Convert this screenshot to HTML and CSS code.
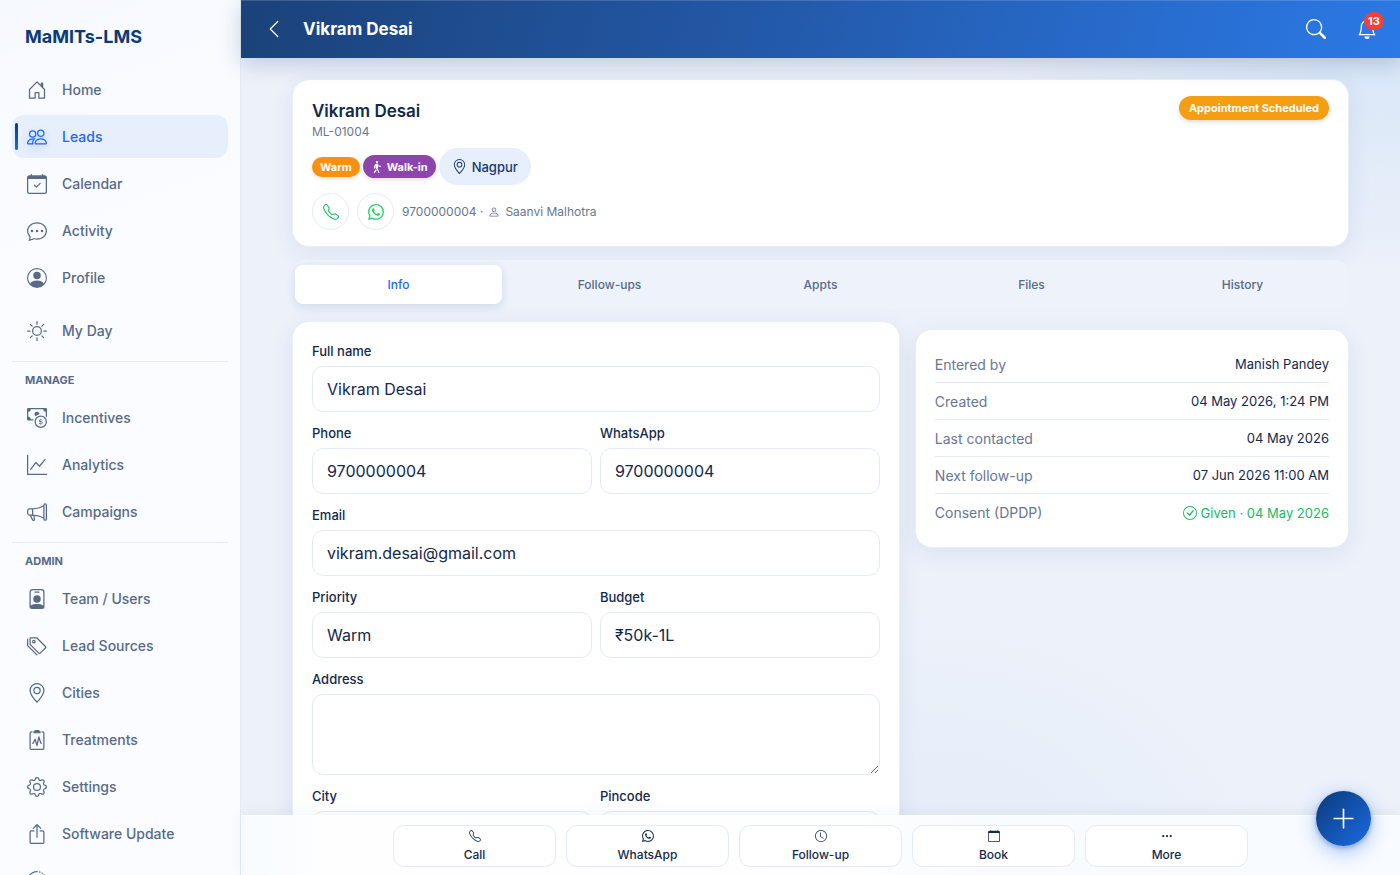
FILE: index.html
```html
<!DOCTYPE html>
<html lang="en">
<head>
<meta charset="utf-8">
<meta name="viewport" content="width=device-width, initial-scale=1">
<title>Vikram Desai – MaMITs-LMS</title>
<link rel="stylesheet" href="styles.css">
</head>
<body>
<svg class="sprite" aria-hidden="true">
  <symbol id="i-house" viewBox="0 0 16 16"><path fill-rule="evenodd" d="M8.354 1.146a.5.5 0 0 0-.708 0l-6 6A.5.5 0 0 0 1.5 7.5v7a.5.5 0 0 0 .5.5h4.5a.5.5 0 0 0 .5-.5v-4h2v4a.5.5 0 0 0 .5.5H14a.5.5 0 0 0 .5-.5v-7a.5.5 0 0 0-.146-.354L13 5.793V2.5a.5.5 0 0 0-.5-.5h-1a.5.5 0 0 0-.5.5v1.293zM2.5 14V7.707l5.5-5.5 5.5 5.5V14H10v-4a.5.5 0 0 0-.5-.5h-3a.5.5 0 0 0-.5.5v4z"/></symbol>
  <symbol id="i-people" viewBox="0 0 16 16"><path d="M15 14s1 0 1-1-1-4-5-4-5 3-5 4 1 1 1 1zm-7.978-1L7 12.996c.001-.264.167-1.03.76-1.72C8.312 10.629 9.282 10 11 10c1.717 0 2.687.63 3.24 1.276.593.69.758 1.457.76 1.72l-.008.002-.014.002zM11 7a2 2 0 1 0 0-4 2 2 0 0 0 0 4m3-2a3 3 0 1 1-6 0 3 3 0 0 1 6 0M6.936 9.28a6 6 0 0 0-1.23-.247A7 7 0 0 0 5 9c-4 0-5 3-5 4q0 1 1 1h4.216A2.24 2.24 0 0 1 5 13c0-1.01.377-2.042 1.09-2.904.243-.294.526-.569.846-.816M4.92 10A5.5 5.5 0 0 0 4 13H1c0-.26.164-1.03.76-1.724.545-.636 1.492-1.256 3.16-1.275ZM1.5 5.5a3 3 0 1 1 6 0 3 3 0 0 1-6 0m3-2a2 2 0 1 0 0 4 2 2 0 0 0 0-4"/></symbol>
  <symbol id="i-calendar-check" viewBox="0 0 16 16"><path d="M10.854 7.146a.5.5 0 0 1 0 .708l-3 3a.5.5 0 0 1-.708 0l-1.5-1.5a.5.5 0 1 1 .708-.708L7.5 9.793l2.646-2.647a.5.5 0 0 1 .708 0"/><path d="M3.5 0a.5.5 0 0 1 .5.5V1h8V.5a.5.5 0 0 1 1 0V1h1a2 2 0 0 1 2 2v11a2 2 0 0 1-2 2H2a2 2 0 0 1-2-2V3a2 2 0 0 1 2-2h1V.5a.5.5 0 0 1 .5-.5M1 4v10a1 1 0 0 0 1 1h12a1 1 0 0 0 1-1V4z"/></symbol>
  <symbol id="i-calendar" viewBox="0 0 16 16"><path d="M3.5 0a.5.5 0 0 1 .5.5V1h8V.5a.5.5 0 0 1 1 0V1h1a2 2 0 0 1 2 2v11a2 2 0 0 1-2 2H2a2 2 0 0 1-2-2V3a2 2 0 0 1 2-2h1V.5a.5.5 0 0 1 .5-.5M1 4v10a1 1 0 0 0 1 1h12a1 1 0 0 0 1-1V4z"/></symbol>
  <symbol id="i-chat" viewBox="0 0 16 16"><path d="M5 8a1 1 0 1 1-2 0 1 1 0 0 1 2 0m4 0a1 1 0 1 1-2 0 1 1 0 0 1 2 0m3 1a1 1 0 1 0 0-2 1 1 0 0 0 0 2"/><path d="m2.165 15.803.02-.004c1.83-.363 2.948-.842 3.468-1.105A9 9 0 0 0 8 15c4.418 0 8-3.134 8-7s-3.582-7-8-7-8 3.134-8 7c0 1.76.743 3.37 1.97 4.6a10.4 10.4 0 0 1-.524 2.318l-.003.011a11 11 0 0 1-.244.637c-.079.186.074.394.273.362a22 22 0 0 0 .693-.125m.8-3.108a1 1 0 0 0-.287-.801C1.618 10.83 1 9.468 1 8c0-3.192 3.004-6 7-6s7 2.808 7 6-3.004 6-7 6a8 8 0 0 1-2.088-.272 1 1 0 0 0-.711.074c-.387.196-1.24.57-2.634.893a11 11 0 0 0 .398-2"/></symbol>
  <symbol id="i-profile" viewBox="0 0 16 16"><path d="M11 6a3 3 0 1 1-6 0 3 3 0 0 1 6 0"/><path fill-rule="evenodd" d="M0 8a8 8 0 1 1 16 0A8 8 0 0 1 0 8m8-7a7 7 0 0 0-5.468 11.37C3.242 11.226 4.805 10 8 10s4.757 1.225 5.468 2.37A7 7 0 0 0 8 1"/></symbol>
  <symbol id="i-sun" viewBox="0 0 16 16"><path d="M8 11a3 3 0 1 1 0-6 3 3 0 0 1 0 6m0 1a4 4 0 1 0 0-8 4 4 0 0 0 0 8M8 0a.5.5 0 0 1 .5.5v2a.5.5 0 0 1-1 0v-2A.5.5 0 0 1 8 0m0 13a.5.5 0 0 1 .5.5v2a.5.5 0 0 1-1 0v-2A.5.5 0 0 1 8 13m8-5a.5.5 0 0 1-.5.5h-2a.5.5 0 0 1 0-1h2a.5.5 0 0 1 .5.5M3 8a.5.5 0 0 1-.5.5h-2a.5.5 0 0 1 0-1h2A.5.5 0 0 1 3 8m10.657-5.657a.5.5 0 0 1 0 .707l-1.414 1.415a.5.5 0 1 1-.707-.708l1.414-1.414a.5.5 0 0 1 .707 0m-9.193 9.193a.5.5 0 0 1 0 .707L3.05 13.657a.5.5 0 0 1-.707-.707l1.414-1.414a.5.5 0 0 1 .707 0m9.193 2.121a.5.5 0 0 1-.707 0l-1.414-1.414a.5.5 0 0 1 .707-.707l1.414 1.414a.5.5 0 0 1 0 .707M4.464 4.465a.5.5 0 0 1-.707 0L2.343 3.05a.5.5 0 1 1 .707-.707l1.414 1.414a.5.5 0 0 1 0 .708"/></symbol>
  <symbol id="i-cash" viewBox="0 0 16 16"><path fill-rule="evenodd" d="M11 15a4 4 0 1 0 0-8 4 4 0 0 0 0 8m5-4a5 5 0 1 1-10 0 5 5 0 0 1 10 0"/><path d="M9.438 11.944c.047.596.518 1.06 1.363 1.116v.44h.375v-.443c.875-.061 1.386-.529 1.386-1.207 0-.618-.39-.936-1.09-1.1l-.296-.07v-1.2c.376.043.614.248.671.532h.658c-.047-.575-.54-1.024-1.329-1.073V8.5h-.375v.45c-.747.073-1.255.522-1.255 1.158 0 .562.378.92 1.007 1.066l.248.061v1.272c-.384-.058-.639-.27-.696-.563h-.668zm1.36-1.354c-.369-.085-.569-.26-.569-.522 0-.294.216-.514.572-.578v1.1zm.432.746c.449.104.655.272.655.569 0 .339-.257.571-.709.614v-1.195z"/><path d="M1 0a1 1 0 0 0-1 1v8a1 1 0 0 0 1 1h4.083q.088-.517.258-1H3a2 2 0 0 0-2-2V3a2 2 0 0 0 2-2h10a2 2 0 0 0 2 2v3.528c.38.34.717.728 1 1.154V1a1 1 0 0 0-1-1z"/><path d="M9.998 5.083 10 5a2 2 0 1 0-3.132 1.65 6 6 0 0 1 3.13-1.567"/></symbol>
  <symbol id="i-graph" viewBox="0 0 16 16"><path fill-rule="evenodd" d="M0 0h1v15h15v1H0zm14.817 3.113a.5.5 0 0 1 .07.704l-4.5 5.5a.5.5 0 0 1-.74.037L7.06 6.767l-3.656 5.027a.5.5 0 0 1-.808-.588l4-5.5a.5.5 0 0 1 .758-.06l2.609 2.61 4.15-5.073a.5.5 0 0 1 .704-.07"/></symbol>
  <symbol id="i-megaphone" viewBox="0 0 16 16"><path d="M13 2.5a1.5 1.5 0 0 1 3 0v11a1.5 1.5 0 0 1-3 0v-.214c-2.162-1.241-4.49-1.843-6.912-2.083l.405 2.712A1 1 0 0 1 5.51 15.1h-.548a1 1 0 0 1-.916-.599l-1.85-3.49-.202-.003A2.014 2.014 0 0 1 0 9V7a2.02 2.02 0 0 1 1.992-2.013 75 75 0 0 0 2.483-.075c3.043-.154 6.148-.849 8.525-2.199zm1 0v11a.5.5 0 0 0 1 0v-11a.5.5 0 0 0-1 0m-1 1.35c-2.344 1.205-5.209 1.842-8 2.033v4.233q.27.015.537.036c2.568.189 5.093.744 7.463 1.993zm-9 6.215v-4.13a95 95 0 0 1-1.992.052A1.02 1.02 0 0 0 1 7v2c0 .55.448 1.002 1.006 1.009A61 61 0 0 1 4 10.065m-.657.975 1.609 3.037.01.024h.548l-.002-.014-.443-2.966a68 68 0 0 0-1.722-.082z"/></symbol>
  <symbol id="i-badge" viewBox="0 0 16 16"><path d="M6.5 2a.5.5 0 0 0 0 1h3a.5.5 0 0 0 0-1zM11 8a3 3 0 1 1-6 0 3 3 0 0 1 6 0"/><path d="M4.5 0A2.5 2.5 0 0 0 2 2.5V14a2 2 0 0 0 2 2h8a2 2 0 0 0 2-2V2.5A2.5 2.5 0 0 0 11.5 0zM3 2.5A1.5 1.5 0 0 1 4.5 1h7A1.5 1.5 0 0 1 13 2.5v10.795a4.2 4.2 0 0 0-.776-.492C11.392 12.387 10.063 12 8 12s-3.392.387-4.224.803a4.2 4.2 0 0 0-.776.492z"/></symbol>
  <symbol id="i-tags" viewBox="0 0 16 16"><path d="M3 2v4.586l7 7L14.586 9l-7-7zM2 2a1 1 0 0 1 1-1h4.586a1 1 0 0 1 .707.293l7 7a1 1 0 0 1 0 1.414l-4.586 4.586a1 1 0 0 1-1.414 0l-7-7A1 1 0 0 1 2 6.586z"/><path d="M5.5 5a.5.5 0 1 1 0-1 .5.5 0 0 1 0 1m0 1a1.5 1.5 0 1 0 0-3 1.5 1.5 0 0 0 0 3M1 7.086a1 1 0 0 0 .293.707L8.75 15.25l-.043.043a1 1 0 0 1-1.414 0l-7-7A1 1 0 0 1 0 7.586V3a1 1 0 0 1 1-1z"/></symbol>
  <symbol id="i-geo" viewBox="0 0 16 16"><path d="M12.166 8.94c-.524 1.062-1.234 2.12-1.96 3.07A32 32 0 0 1 8 14.58a32 32 0 0 1-2.206-2.57c-.726-.95-1.436-2.008-1.96-3.07C3.304 7.867 3 6.862 3 6a5 5 0 0 1 10 0c0 .862-.305 1.867-.834 2.94M8 16s6-5.686 6-10A6 6 0 0 0 2 6c0 4.314 6 10 6 10"/><path d="M8 8a2 2 0 1 1 0-4 2 2 0 0 1 0 4m0 1a3 3 0 1 0 0-6 3 3 0 0 0 0 6"/></symbol>
  <symbol id="i-clipboard" viewBox="0 0 16 16"><path d="M9.5 0a.5.5 0 0 1 .5.5.5.5 0 0 0 .5.5.5.5 0 0 1 .5.5V2a.5.5 0 0 1-.5.5h-5A.5.5 0 0 1 5 2v-.5a.5.5 0 0 1 .5-.5.5.5 0 0 0 .5-.5.5.5 0 0 1 .5-.5z"/><path d="M3 2.5a.5.5 0 0 1 .5-.5H4a.5.5 0 0 0 0-1h-.5A1.5 1.5 0 0 0 2 2.5v12A1.5 1.5 0 0 0 3.5 16h9a1.5 1.5 0 0 0 1.5-1.5v-12A1.5 1.5 0 0 0 12.5 1H12a.5.5 0 0 0 0 1h.5a.5.5 0 0 1 .5.5v12a.5.5 0 0 1-.5.5h-9a.5.5 0 0 1-.5-.5z"/><path d="M9.979 5.356a.5.5 0 0 0-.968.04L7.92 10.49l-.94-3.135a.5.5 0 0 0-.926-.08L4.69 10H4.5a.5.5 0 0 0 0 1H5a.5.5 0 0 0 .447-.276l.936-1.873 1.138 3.793a.5.5 0 0 0 .968-.04L9.58 7.51l.94 3.135A.5.5 0 0 0 11 11h.5a.5.5 0 0 0 0-1h-.128z"/></symbol>
  <symbol id="i-gear" viewBox="0 0 16 16"><path d="M8 4.754a3.246 3.246 0 1 0 0 6.492 3.246 3.246 0 0 0 0-6.492M5.754 8a2.246 2.246 0 1 1 4.492 0 2.246 2.246 0 0 1-4.492 0"/><path d="M9.796 1.343c-.527-1.79-3.065-1.79-3.592 0l-.094.319a.873.873 0 0 1-1.255.52l-.292-.16c-1.64-.892-3.433.902-2.54 2.541l.159.292a.873.873 0 0 1-.52 1.255l-.319.094c-1.79.527-1.79 3.065 0 3.592l.319.094a.873.873 0 0 1 .52 1.255l-.16.292c-.892 1.64.901 3.434 2.541 2.54l.292-.159a.873.873 0 0 1 1.255.52l.094.319c.527 1.79 3.065 1.79 3.592 0l.094-.319a.873.873 0 0 1 1.255-.52l.292.16c1.64.893 3.434-.902 2.54-2.541l-.159-.292a.873.873 0 0 1 .52-1.255l.319-.094c1.79-.527 1.79-3.065 0-3.592l-.319-.094a.873.873 0 0 1-.52-1.255l.16-.292c.893-1.64-.902-3.433-2.541-2.54l-.292.159a.873.873 0 0 1-1.255-.52zm-2.633.283c.246-.835 1.428-.835 1.674 0l.094.319a1.873 1.873 0 0 0 2.693 1.115l.291-.16c.764-.415 1.6.42 1.184 1.185l-.159.292a1.873 1.873 0 0 0 1.116 2.692l.318.094c.835.246.835 1.428 0 1.674l-.319.094a1.873 1.873 0 0 0-1.115 2.693l.16.291c.415.764-.42 1.6-1.185 1.184l-.291-.159a1.873 1.873 0 0 0-2.693 1.116l-.094.318c-.246.835-1.428.835-1.674 0l-.094-.319a1.873 1.873 0 0 0-2.692-1.115l-.292.16c-.764.415-1.6-.42-1.184-1.185l.159-.291A1.873 1.873 0 0 0 1.945 8.93l-.319-.094c-.835-.246-.835-1.428 0-1.674l.319-.094A1.873 1.873 0 0 0 3.06 4.377l-.16-.292c-.415-.764.42-1.6 1.185-1.184l.292.159a1.873 1.873 0 0 0 2.692-1.115z"/></symbol>
  <symbol id="i-up" viewBox="0 0 16 16"><path fill-rule="evenodd" d="M3.5 6a.5.5 0 0 0-.5.5v8a.5.5 0 0 0 .5.5h9a.5.5 0 0 0 .5-.5v-8a.5.5 0 0 0-.5-.5h-2a.5.5 0 0 1 0-1h2A1.5 1.5 0 0 1 14 6.5v8a1.5 1.5 0 0 1-1.5 1.5h-9A1.5 1.5 0 0 1 2 14.5v-8A1.5 1.5 0 0 1 3.5 5h2a.5.5 0 0 1 0 1z"/><path fill-rule="evenodd" d="M7.646.146a.5.5 0 0 1 .708 0l3 3a.5.5 0 0 1-.708.708L8.5 1.707V10.5a.5.5 0 0 1-1 0V1.707L5.354 3.854a.5.5 0 1 1-.708-.708z"/></symbol>
  <symbol id="i-history" viewBox="0 0 16 16"><path d="M8.515 1.019A7 7 0 0 0 8 1V0a8 8 0 0 1 .589.022zm2.004.45a7 7 0 0 0-.985-.299l.219-.976q.576.129 1.126.342zm1.37.71a7 7 0 0 0-.439-.27l.493-.87a8 8 0 0 1 .979.654l-.615.789a7 7 0 0 0-.418-.302zm1.834 1.79a7 7 0 0 0-.653-.796l.724-.69q.406.429.747.91zm.744 1.352a7 7 0 0 0-.214-.468l.893-.45a8 8 0 0 1 .45 1.088l-.95.313a7 7 0 0 0-.179-.483m.53 2.507a7 7 0 0 0-.1-1.025l.985-.17q.1.58.116 1.17zm-.131 1.538q.05-.254.081-.51l.993.123a8 8 0 0 1-.23 1.155l-.964-.267q.069-.247.12-.501m-.952 2.379q.276-.436.486-.908l.914.405q-.24.54-.555 1.038zm-.964 1.205q.183-.183.35-.378l.758.653a8 8 0 0 1-.401.432z"/><path d="M8 1a7 7 0 1 0 4.95 11.95l.707.707A8.001 8.001 0 1 1 8 0z"/><path d="M7.5 3a.5.5 0 0 1 .5.5v5.21l3.248 1.856a.5.5 0 0 1-.496.868l-3.5-2A.5.5 0 0 1 7 9V3.5a.5.5 0 0 1 .5-.5"/></symbol>
  <symbol id="i-back" viewBox="0 0 16 16"><path fill-rule="evenodd" d="M11.354 1.646a.5.5 0 0 1 0 .708L5.707 8l5.647 5.646a.5.5 0 0 1-.708.708l-6-6a.5.5 0 0 1 0-.708l6-6a.5.5 0 0 1 .708 0"/></symbol>
  <symbol id="i-search" viewBox="0 0 16 16"><path d="M11.742 10.344a6.5 6.5 0 1 0-1.397 1.398h-.001q.044.06.098.115l3.85 3.85a1 1 0 0 0 1.415-1.414l-3.85-3.85a1 1 0 0 0-.115-.1zM12 6.5a5.5 5.5 0 1 1-11 0 5.5 5.5 0 0 1 11 0"/></symbol>
  <symbol id="i-bell" viewBox="0 0 16 16"><path d="M8 16a2 2 0 0 0 2-2H6a2 2 0 0 0 2 2M8 1.918l-.797.161A4 4 0 0 0 4 6c0 .628-.134 2.197-.459 3.742-.16.767-.376 1.566-.663 2.258h10.244c-.287-.692-.502-1.49-.663-2.258C12.134 8.197 12 6.628 12 6a4 4 0 0 0-3.203-3.92zM14.22 12c.223.447.481.801.78 1H1c.299-.199.557-.553.78-1C2.68 10.2 3 6.88 3 6c0-2.42 1.72-4.44 4.005-4.901a1 1 0 1 1 1.99 0A5 5 0 0 1 13 6c0 .88.32 4.2 1.22 6"/></symbol>
  <symbol id="i-phone" viewBox="0 0 16 16"><path d="M3.654 1.328a.678.678 0 0 0-1.015-.063L1.605 2.3c-.483.484-.661 1.169-.45 1.77a17.6 17.6 0 0 0 4.168 6.608 17.6 17.6 0 0 0 6.608 4.168c.601.211 1.286.033 1.77-.45l1.034-1.034a.678.678 0 0 0-.063-1.015l-2.307-1.794a.68.68 0 0 0-.58-.122l-2.19.547a1.75 1.75 0 0 1-1.657-.459L5.482 8.062a1.75 1.75 0 0 1-.46-1.657l.548-2.19a.68.68 0 0 0-.122-.58zM1.884.511a1.745 1.745 0 0 1 2.612.163L6.29 2.98c.329.423.445.974.315 1.494l-.547 2.19a.68.68 0 0 0 .178.643l2.457 2.457a.68.68 0 0 0 .644.178l2.189-.547a1.75 1.75 0 0 1 1.494.315l2.306 1.794c.829.645.905 1.87.163 2.611l-1.034 1.034c-.74.74-1.846 1.065-2.877.702a18.6 18.6 0 0 1-7.01-4.42 18.6 18.6 0 0 1-4.42-7.009c-.362-1.03-.037-2.137.703-2.877z"/></symbol>
  <symbol id="i-whatsapp" viewBox="0 0 16 16"><path d="M13.601 2.326A7.85 7.85 0 0 0 7.994 0C3.627 0 .068 3.558.064 7.926c0 1.399.366 2.76 1.057 3.965L0 16l4.204-1.102a7.9 7.9 0 0 0 3.79.965h.004c4.368 0 7.926-3.558 7.93-7.93A7.9 7.9 0 0 0 13.6 2.326zM7.994 14.521a6.6 6.6 0 0 1-3.356-.92l-.24-.144-2.494.654.666-2.433-.156-.251a6.56 6.56 0 0 1-1.007-3.505c0-3.626 2.957-6.584 6.591-6.584a6.56 6.56 0 0 1 4.66 1.931 6.56 6.56 0 0 1 1.928 4.66c-.004 3.639-2.961 6.592-6.592 6.592m3.615-4.934c-.197-.099-1.17-.578-1.353-.646-.182-.065-.315-.099-.445.099-.133.197-.513.646-.627.775-.114.133-.232.148-.43.05-.197-.1-.836-.308-1.592-.985-.59-.525-.985-1.175-1.103-1.372-.114-.198-.011-.304.088-.403.087-.088.197-.232.296-.346.1-.114.133-.198.198-.33.065-.134.034-.248-.015-.347-.05-.099-.445-1.076-.612-1.47-.16-.389-.323-.335-.445-.34-.114-.007-.247-.007-.38-.007a.73.73 0 0 0-.529.247c-.182.198-.691.677-.691 1.654s.71 1.916.81 2.049c.098.133 1.394 2.132 3.383 2.992.47.205.84.326 1.129.418.475.152.904.129 1.246.08.38-.058 1.171-.48 1.338-.943.164-.464.164-.86.114-.943-.049-.084-.182-.133-.38-.232"/></symbol>
  <symbol id="i-person" viewBox="0 0 16 16"><path d="M8 8a3 3 0 1 0 0-6 3 3 0 0 0 0 6m2-3a2 2 0 1 1-4 0 2 2 0 0 1 4 0m4 8c0 1-1 1-1 1H3s-1 0-1-1 1-4 6-4 6 3 6 4m-1-.004c-.001-.246-.154-.986-.832-1.664C11.516 10.68 10.289 10 8 10s-3.516.68-4.168 1.332c-.678.678-.83 1.418-.832 1.664z"/></symbol>
  <symbol id="i-walk" viewBox="0 0 16 16"><path d="M9.5 1.5a1.5 1.5 0 1 1-3 0 1.5 1.5 0 0 1 3 0M6.44 3.752A.75.75 0 0 1 7 3.5h1.445c.742 0 1.32.643 1.243 1.38l-.43 4.083a1.8 1.8 0 0 1-.088.395l-.318.906.213.242a.8.8 0 0 1 .114.175l2 4.25a.75.75 0 1 1-1.357.638l-1.956-4.154-1.68-1.921A.75.75 0 0 1 6 8.96l.138-2.613-.435.489-.464 2.786a.75.75 0 1 1-1.48-.246l.5-3a.75.75 0 0 1 .18-.375l2-2.25z"/><path d="M6.25 11.745v-1.418l1.204 1.375.261.524a.8.8 0 0 1-.12.231l-2.5 3.25a.75.75 0 1 1-1.19-.914zm4.22-4.215-.494-.494.205-1.843.006-.067 1.124 1.124h1.44a.75.75 0 0 1 0 1.5H11a.75.75 0 0 1-.531-.22Z"/></symbol>
  <symbol id="i-check" viewBox="0 0 16 16"><path d="M8 15A7 7 0 1 1 8 1a7 7 0 0 1 0 14m0 1A8 8 0 1 0 8 0a8 8 0 0 0 0 16"/><path d="m10.97 4.97-.02.022-3.473 4.425-2.093-2.094a.75.75 0 0 0-1.06 1.06L6.97 11.03a.75.75 0 0 0 1.079-.02l3.992-4.99a.75.75 0 0 0-1.071-1.05"/></symbol>
  <symbol id="i-clock" viewBox="0 0 16 16"><path d="M8 3.5a.5.5 0 0 0-1 0V9a.5.5 0 0 0 .252.434l3.5 2a.5.5 0 0 0 .496-.868L8 8.71z"/><path d="M8 16A8 8 0 1 0 8 0a8 8 0 0 0 0 16m7-8A7 7 0 1 1 1 8a7 7 0 0 1 14 0"/></symbol>
  <symbol id="i-dots" viewBox="0 0 16 16"><path d="M3 9.5a1.5 1.5 0 1 1 0-3 1.5 1.5 0 0 1 0 3m5 0a1.5 1.5 0 1 1 0-3 1.5 1.5 0 0 1 0 3m5 0a1.5 1.5 0 1 1 0-3 1.5 1.5 0 0 1 0 3"/></symbol>
  <symbol id="i-plus" viewBox="0 0 16 16"><path fill-rule="evenodd" d="M8 2a.5.5 0 0 1 .5.5v5h5a.5.5 0 0 1 0 1h-5v5a.5.5 0 0 1-1 0v-5h-5a.5.5 0 0 1 0-1h5v-5A.5.5 0 0 1 8 2"/></symbol>
</svg>

<div class="app">
  <aside class="sidebar">
    <div class="brand">MaMITs-LMS</div>
    <nav class="nav" aria-label="Main">
      <div class="nav-group">
        <a class="nav-item" href="#"><svg class="icon"><use href="#i-house"/></svg>Home</a>
        <a class="nav-item active" href="#" aria-current="page"><svg class="icon"><use href="#i-people"/></svg>Leads</a>
        <a class="nav-item" href="#"><svg class="icon"><use href="#i-calendar-check"/></svg>Calendar</a>
        <a class="nav-item" href="#"><svg class="icon"><use href="#i-chat"/></svg>Activity</a>
        <a class="nav-item" href="#"><svg class="icon"><use href="#i-profile"/></svg>Profile</a>
      </div>
      <div class="nav-group my-day">
        <a class="nav-item" href="#"><svg class="icon"><use href="#i-sun"/></svg>My Day</a>
      </div>
      <div class="nav-group section">
        <h2 class="nav-title">MANAGE</h2>
        <a class="nav-item" href="#"><svg class="icon"><use href="#i-cash"/></svg>Incentives</a>
        <a class="nav-item" href="#"><svg class="icon"><use href="#i-graph"/></svg>Analytics</a>
        <a class="nav-item" href="#"><svg class="icon"><use href="#i-megaphone"/></svg>Campaigns</a>
      </div>
      <div class="nav-group section">
        <h2 class="nav-title">ADMIN</h2>
        <a class="nav-item" href="#"><svg class="icon"><use href="#i-badge"/></svg>Team / Users</a>
        <a class="nav-item" href="#"><svg class="icon"><use href="#i-tags"/></svg>Lead Sources</a>
        <a class="nav-item" href="#"><svg class="icon"><use href="#i-geo"/></svg>Cities</a>
        <a class="nav-item" href="#"><svg class="icon"><use href="#i-clipboard"/></svg>Treatments</a>
        <a class="nav-item" href="#"><svg class="icon"><use href="#i-gear"/></svg>Settings</a>
        <a class="nav-item" href="#"><svg class="icon"><use href="#i-up"/></svg>Software Update</a>
        <a class="nav-item" href="#"><svg class="icon"><use href="#i-history"/></svg>Audit Log</a>
      </div>
    </nav>
  </aside>

  <div class="main">
    <header class="topbar">
      <button class="icon-btn" type="button" aria-label="Back"><svg class="icon"><use href="#i-back"/></svg></button>
      <h1 class="topbar-title">Vikram Desai</h1>
      <div class="topbar-tools">
        <button class="icon-btn" type="button" aria-label="Search"><svg class="icon"><use href="#i-search"/></svg></button>
        <button class="icon-btn" type="button" aria-label="Notifications"><svg class="icon"><use href="#i-bell"/></svg><span class="count">13</span></button>
      </div>
    </header>

    <main class="content">
      <div class="container">
        <section class="card hero">
          <div class="hero-main">
            <h2 class="hero-name">Vikram Desai</h2>
            <p class="hero-id">ML-01004</p>
            <div class="tags">
              <span class="tag warm">Warm</span>
              <span class="tag walk"><svg class="icon"><use href="#i-walk"/></svg>Walk-in</span>
              <span class="place"><svg class="icon"><use href="#i-geo"/></svg>Nagpur</span>
            </div>
            <div class="contact">
              <a class="round call" href="#" aria-label="Call"><svg class="icon"><use href="#i-phone"/></svg></a>
              <a class="round chat" href="#" aria-label="WhatsApp"><svg class="icon"><use href="#i-whatsapp"/></svg></a>
              <span class="contact-text">9700000004 · <svg class="icon"><use href="#i-person"/></svg> Saanvi Malhotra</span>
            </div>
          </div>
          <span class="status">Appointment Scheduled</span>
        </section>

        <div class="tabs" role="tablist">
          <button class="tab selected" type="button" role="tab" aria-selected="true">Info</button>
          <button class="tab" type="button" role="tab" aria-selected="false">Follow-ups</button>
          <button class="tab" type="button" role="tab" aria-selected="false">Appts</button>
          <button class="tab" type="button" role="tab" aria-selected="false">Files</button>
          <button class="tab" type="button" role="tab" aria-selected="false">History</button>
        </div>

        <div class="columns">
          <form class="card form">
            <div class="field wide"><label for="name">Full name</label><input id="name" type="text" value="Vikram Desai"></div>
            <div class="field"><label for="phone">Phone</label><input id="phone" type="tel" value="9700000004"></div>
            <div class="field"><label for="wa">WhatsApp</label><input id="wa" type="tel" value="9700000004"></div>
            <div class="field wide"><label for="email">Email</label><input id="email" type="email" value="vikram.desai@gmail.com"></div>
            <div class="field"><label for="priority">Priority</label><select id="priority"><option>Warm</option></select></div>
            <div class="field"><label for="budget">Budget</label><select id="budget"><option>₹50k-1L</option></select></div>
            <div class="field wide"><label for="address">Address</label><textarea id="address"></textarea></div>
            <div class="field"><label for="city">City</label><input id="city" type="text"></div>
            <div class="field"><label for="pin">Pincode</label><input id="pin" type="text"></div>
          </form>

          <dl class="card facts">
            <div class="fact"><dt>Entered by</dt><dd>Manish Pandey</dd></div>
            <div class="fact"><dt>Created</dt><dd>04 May 2026, 1:24 PM</dd></div>
            <div class="fact"><dt>Last contacted</dt><dd>04 May 2026</dd></div>
            <div class="fact"><dt>Next follow-up</dt><dd>07 Jun 2026 11:00 AM</dd></div>
            <div class="fact"><dt>Consent (DPDP)</dt><dd class="given"><svg class="icon"><use href="#i-check"/></svg>Given · 04 May 2026</dd></div>
          </dl>
        </div>
      </div>
    </main>

    <footer class="actions">
      <div class="actions-row">
        <button class="action" type="button"><svg class="icon"><use href="#i-phone"/></svg>Call</button>
        <button class="action" type="button"><svg class="icon"><use href="#i-whatsapp"/></svg>WhatsApp</button>
        <button class="action" type="button"><svg class="icon"><use href="#i-clock"/></svg>Follow-up</button>
        <button class="action" type="button"><svg class="icon"><use href="#i-calendar"/></svg>Book</button>
        <button class="action" type="button"><svg class="icon"><use href="#i-dots"/></svg>More</button>
      </div>
    </footer>
  </div>
  <button class="fab" type="button" aria-label="Add lead"><svg class="icon"><use href="#i-plus"/></svg></button>
</div>
</body>
</html>
```

FILE: styles.css
```css
:root {
  --ink: #13294a;
  --muted: #68778f;
  --nav: #586a86;
  --line: #e4ebf7;
  --blue: #1a6be6;
}

* { box-sizing: border-box; }

body {
  margin: 0;
  font-family: Inter, "Noto Sans", sans-serif;
  font-size: 14px;
  color: var(--ink);
}

h1, h2, p, dl, dd { margin: 0; }
button, input, select, textarea { font: inherit; color: inherit; }
button { cursor: pointer; }

.sprite { position: absolute; width: 0; height: 0; }

.icon {
  display: block;
  flex: none;
  width: 20px;
  height: 20px;
  fill: currentColor;
}

.app {
  display: flex;
  height: 100vh;
  overflow: hidden;
  background:
    radial-gradient(ellipse 420px 280px at 100% 0, #d3e4f7, transparent),
    radial-gradient(ellipse 400px 300px at 66% 100%, #e5edf9, transparent),
    #edf1fa;
}

/* Sidebar */
.sidebar {
  flex: none;
  width: 241px;
  padding: 0 12px;
  overflow: hidden;
  border-right: 1px solid #e3eaf6;
  background: linear-gradient(160deg, #f6f9fe, #fafcff 30%);
}

.brand {
  padding: 25px 13px 19px;
  font-size: 18px;
  line-height: 24px;
  font-weight: 700;
  color: #0b3a78;
}

.nav-group {
  display: flex;
  flex-direction: column;
  gap: 4px;
}

.my-day { margin-top: 10px; }

.section {
  margin-top: 9px;
  padding-top: 10px;
  border-top: 1px solid var(--line);
}

.nav-title {
  margin-bottom: 4px;
  padding-left: 13px;
  font-size: 11px;
  line-height: 16px;
  font-weight: 700;
  color: var(--nav);
}

.nav-item {
  position: relative;
  display: flex;
  align-items: center;
  gap: 15px;
  height: 43px;
  padding-left: 15px;
  border-radius: 12px;
  font-weight: 500;
  color: var(--nav);
  text-decoration: none;
}

.nav-item.active {
  background: #e8effc;
  color: var(--blue);
}

.nav-item.active::before {
  content: "";
  position: absolute;
  left: 3px;
  top: 8px;
  bottom: 8px;
  width: 3px;
  border-radius: 2px;
  background: linear-gradient(#0b3a78, #1a6be6);
}

.nav-item.active .icon { filter: drop-shadow(0 3px 5px rgba(26, 107, 230, 0.3)); }

/* Top bar */
.main {
  display: flex;
  flex-direction: column;
  flex: 1;
  min-width: 0;
}

.topbar {
  position: relative;
  z-index: 2;
  display: flex;
  flex: none;
  align-items: center;
  gap: 9px;
  height: 58px;
  padding: 0 13px;
  background: linear-gradient(105deg, #1b4279, #2256a3 40%, #2b79e6);
  box-shadow: inset 0 1px rgba(255, 255, 255, 0.15), 0 6px 22px rgba(15, 45, 95, 0.2);
  color: #fff;
}

.topbar-tools {
  display: flex;
  gap: 11px;
}

.icon-btn {
  position: relative;
  display: grid;
  place-items: center;
  width: 40px;
  height: 40px;
  padding: 0;
  border: 0;
  background: none;
}

.topbar-title {
  flex: 1;
  font-size: 17px;
  line-height: 24px;
  font-weight: 700;
}

.count {
  position: absolute;
  top: 3px;
  right: 3px;
  min-width: 20px;
  padding: 0 4px;
  border-radius: 9px;
  background: #ef4136;
  font-size: 11px;
  line-height: 18px;
  font-weight: 700;
}

/* Content */
.content {
  flex: 1;
  min-height: 0;
  padding: 21px 24px;
  overflow-y: auto;
  scrollbar-width: none;
}

.container {
  max-width: 1057px;
  margin: 0 auto;
}

.card {
  border: 1px solid #e8eef8;
  border-radius: 17px;
  background: #fff;
  box-shadow: 0 6px 24px rgba(30, 75, 140, 0.09);
}

.hero {
  display: flex;
  align-items: flex-start;
  justify-content: space-between;
  padding: 16px 19px;
}

.hero-main { padding-top: 3px; }

.hero-name {
  font-size: 17px;
  line-height: 24px;
  font-weight: 600;
}

.hero-id {
  font-size: 12px;
  line-height: 18px;
  color: var(--muted);
}

.tags {
  display: flex;
  align-items: center;
  gap: 3px;
  margin-top: 7px;
}

.tag {
  display: flex;
  align-items: center;
  gap: 4px;
  height: 20px;
  padding: 0 8px;
  border-radius: 12px;
  font-size: 11px;
  font-weight: 700;
  color: #fff;
  box-shadow: 0 2px 4px rgba(0, 0, 0, 0.12);
}

.tag.warm { background: #f9900f; }
.tag.walk { height: 23px; background: #8e44ad; }
.tag .icon { width: 12px; height: 12px; }

.place {
  display: flex;
  align-items: center;
  gap: 5px;
  height: 37px;
  padding: 0 13px;
  border-radius: 19px;
  background: #e8effc;
  font-size: 13px;
  font-weight: 500;
  color: #14396f;
}

.place .icon { width: 15px; height: 15px; }

.contact {
  display: flex;
  align-items: center;
  gap: 8px;
  margin-top: 8px;
}

.round {
  display: grid;
  place-items: center;
  width: 37px;
  height: 37px;
  border: 1px solid var(--line);
  border-radius: 50%;
}

.round .icon { width: 16px; height: 16px; }
.round.call { color: #22b768; }
.round.chat { color: #25d366; }

.contact-text {
  display: flex;
  align-items: center;
  gap: 5px;
  font-size: 12px;
  color: var(--muted);
}

.contact-text .icon { width: 12px; height: 12px; }

.status {
  padding: 0 10px;
  border-radius: 12px;
  background: #f59e12;
  font-size: 11px;
  line-height: 24px;
  font-weight: 700;
  color: #fff;
  box-shadow: 0 2px 4px rgba(0, 0, 0, 0.14);
}

.tabs {
  display: grid;
  grid-template-columns: repeat(5, 1fr);
  gap: 4px;
  margin-top: 13px;
  padding: 5px 3px;
  border-radius: 13px;
  background: #edf2fb;
}

.tab {
  height: 39px;
  border: 0;
  border-radius: 8px;
  background: none;
  font-size: 12px;
  font-weight: 500;
  color: var(--nav);
}

.tab.selected {
  background: #fff;
  color: var(--blue);
  box-shadow: 0 3px 10px rgba(30, 75, 140, 0.14);
}

.columns {
  display: grid;
  grid-template-columns: 7fr 5fr;
  align-items: start;
  gap: 15px;
  margin-top: 12px;
}

.form {
  display: grid;
  grid-template-columns: 1fr 1fr;
  gap: 11px 8px;
  padding: 19px;
}

.field {
  display: flex;
  flex-direction: column;
  gap: 5px;
  min-width: 0;
}

.field.wide { grid-column: 1 / -1; }

.field label {
  font-size: 13px;
  line-height: 20px;
  font-weight: 500;
}

.field input,
.field select,
.field textarea {
  width: 100%;
  height: 46px;
  padding: 0 14px;
  border: 1px solid var(--line);
  border-radius: 11px;
  outline: 0;
  appearance: none;
  background: #fff;
  font-size: 16px;
}

.field textarea {
  display: block;
  height: 81px;
  padding: 11px 14px;
  resize: vertical;
}

.facts {
  margin-top: 8px;
  padding: 16px 19px;
}

.fact {
  display: flex;
  align-items: center;
  justify-content: space-between;
  height: 37px;
  border-bottom: 1px solid var(--line);
}

.fact:last-child { border-bottom: 0; }
.fact dt { color: var(--muted); }
.fact dd { font-size: 13px; }

.fact .given {
  display: flex;
  align-items: center;
  gap: 4px;
  color: #20b769;
}

.given .icon { width: 14px; height: 14px; }

/* Bottom actions */
.actions {
  position: relative;
  z-index: 1;
  flex: none;
  padding: 9px 24px 8px;
  border-top: 1px solid #fff;
  background: linear-gradient(90deg, #f7fbff, #fefefe 8%, #fefefe 52%, #f8fbff 64%);
  box-shadow: 0 -3px 14px rgba(30, 60, 110, 0.06);
}

.actions-row {
  display: grid;
  grid-template-columns: repeat(5, 1fr);
  gap: 10px;
  max-width: 855px;
  margin: 0 auto;
}

.action {
  display: flex;
  flex-direction: column;
  align-items: center;
  gap: 5px;
  height: 42px;
  padding: 4px 0;
  border: 1px solid var(--line);
  border-radius: 11px;
  background: #fff;
  font-size: 12px;
  line-height: 16px;
  font-weight: 500;
}

.action .icon { width: 12px; height: 12px; }

.fab {
  position: absolute;
  right: 29px;
  bottom: 29px;
  z-index: 3;
  display: grid;
  place-items: center;
  width: 55px;
  height: 55px;
  padding: 0;
  border: 0;
  border-radius: 50%;
  background: linear-gradient(135deg, #0b3a78, #1a6be6);
  box-shadow: 0 6px 20px rgba(26, 107, 230, 0.38), 0 2px 5px rgba(10, 40, 90, 0.3);
  color: #fff;
}

.fab .icon { width: 27px; height: 27px; }
```
